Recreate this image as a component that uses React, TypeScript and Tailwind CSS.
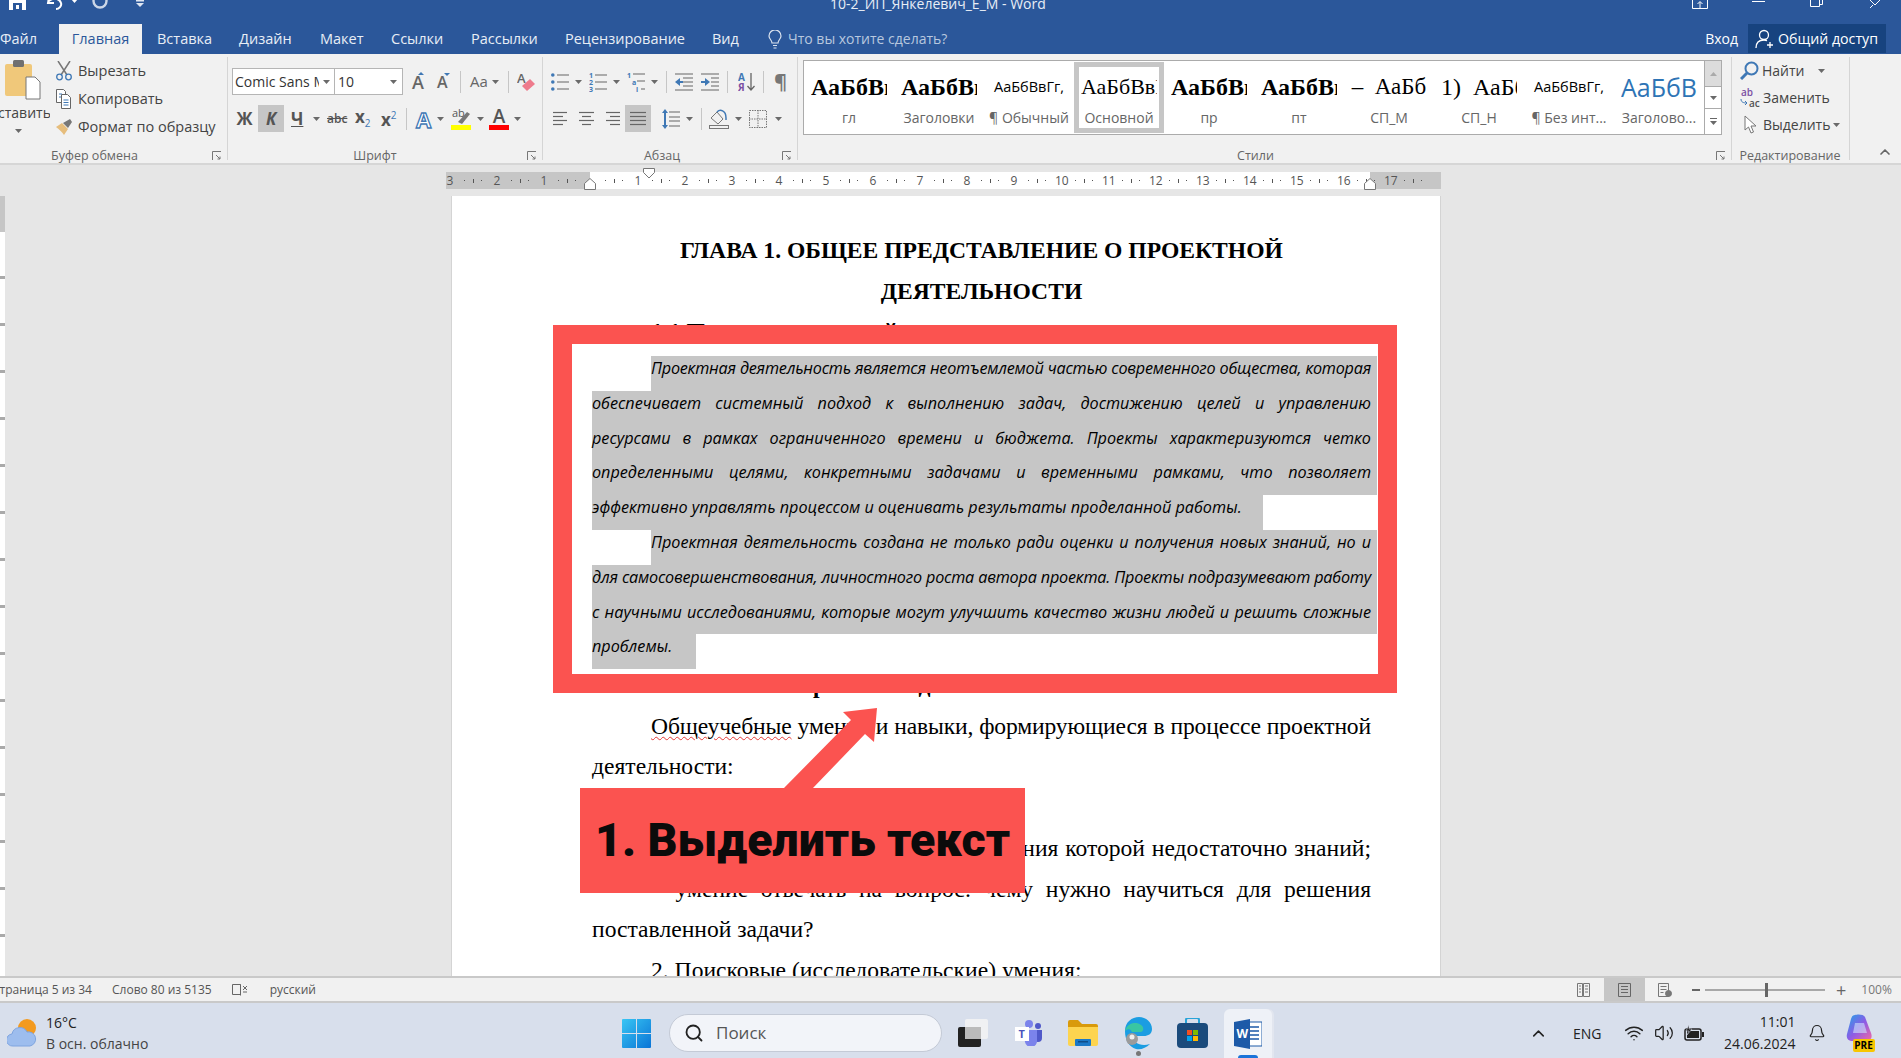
import { ReactNode } from "react";
import { Bell, ChevronUp, Search, Volume2, Wifi } from "lucide-react";

const Caret = ({ className = "" }: { className?: string }) => (
    <svg width="7" height="4" viewBox="0 0 7 4" className={className}><path d="M0 0h7L3.5 4z" fill="#6a6a6a" /></svg>
);

const Sep = ({ className = "" }: { className?: string }) => <div className={`w-px h-[22px] bg-[#c6c6c6] ${className}`} />;

const Launcher = ({ className = "" }: { className?: string }) => (
    <svg width="10" height="10" viewBox="0 0 10 10" className={`absolute -bottom-[1px] ${className}`} fill="none" stroke="#777">
        <path d="M.5 9V.5H9" /><path d="M4 4l4 4M8 5.5V8H5.5" />
    </svg>
);

const TextLines = ({ rows }: { rows: [number, number][] }) => (
    <svg width="18" height="20" viewBox="0 0 18 20" stroke="#666" strokeWidth="1.2">
        {rows.map(([a, b], i) => <line key={i} x1={a} x2={b} y1={3.5 + i * 4} y2={3.5 + i * 4} />)}
    </svg>
);

const Group = ({ width, label, labelClass = "", children, launcher }: { width: string; label: string; labelClass?: string; children: ReactNode; launcher?: string }) => (
    <div className={`relative shrink-0 flex flex-col border-r border-[#d5d5d5] mb-[3px] mt-[3px] ${width}`}>
        <div className="flex-1 min-h-0">{children}</div>
        <div className={`h-[16px] leading-[16px] translate-y-[4px] text-[12.5px] text-[#666] text-center ${labelClass}`}>{label}</div>
        {launcher && <Launcher className={launcher} />}
    </div>
);

const tabs = [
    { name: "Главная", cls: "w-[83px] ml-[24px] bg-[#f1f1f1] text-[#2b579a]" },
    { name: "Вставка", cls: "w-[52px] ml-[15px]" },
    { name: "Дизайн", cls: "w-[51px] ml-[30px]" },
    { name: "Макет", cls: "w-[43px] ml-[30px]" },
    { name: "Ссылки", cls: "w-[51px] ml-[28px]" },
    { name: "Рассылки", cls: "w-[65px] ml-[29px]" },
    { name: "Рецензирование", cls: "w-[118px] ml-[29px]" },
    { name: "Вид", cls: "w-[26px] ml-[29px]" },
];

const styleItems = [
    { sample: "АаБбВвГг", cls: "font-['Liberation_Serif',serif] text-[24px] font-bold", label: "гл" },
    { sample: "АаБбВвГг", cls: "font-['Liberation_Serif',serif] text-[24px] font-bold", label: "Заголовки" },
    { sample: "АаБбВвГг,", cls: "text-[14.5px] font-medium", label: "¶ Обычный" },
    { sample: "АаБбВвГг", cls: "font-['Liberation_Serif',serif] text-[22px]", label: "Основной", active: true },
    { sample: "АаБбВвГг", cls: "font-['Liberation_Serif',serif] text-[24px] font-bold", label: "пр" },
    { sample: "АаБбВвГг", cls: "font-['Liberation_Serif',serif] text-[24px] font-bold", label: "пт" },
    { sample: "–  АаБб", cls: "font-['Liberation_Serif',serif] text-[23px]", label: "СП_М" },
    { sample: "1)  АаБбВв", cls: "font-['Liberation_Serif',serif] text-[24px] text-left", label: "СП_Н" },
    { sample: "АаБбВвГг,", cls: "text-[14.5px] font-medium", label: "¶ Без инт..." },
    { sample: "АаБбВвГг", cls: "text-[25px] text-[#2e74b5]", label: "Заголово..." },
];

const Ruler = () => {
    const cells = [];
    for (let i = -3; i <= 17; i++) cells.push(Math.abs(i) || "");
    return (
        <div className="relative ml-[446px] w-[995px] h-[17px] mt-[7px] overflow-hidden bg-[linear-gradient(to_right,#c6c6c6_144px,#fff_144px,#fff_924px,#c6c6c6_924px)]">
            <div className="flex -ml-[2px] text-[12px] leading-[17px] text-[#555]">
                {cells.map((n, i) => (
                    <div key={i} className="w-[47px] shrink-0 flex items-center">
                        <span className="w-[12px] text-center">{n}</span>
                        <div className="flex-1 flex justify-evenly items-center pr-[1px]">
                            <span className="w-px h-px bg-[#555]" />
                            <span className="w-px h-[4px] bg-[#555]" />
                            <span className="w-px h-px bg-[#555]" />
                        </div>
                    </div>
                ))}
            </div>
        </div>
    );
};

const SelLine = ({ children, cls = "" }: { children: ReactNode; cls?: string }) => (
    <div className={`h-[34.8px] leading-[25px] bg-[#c6c6c6] pr-[6px] text-justify [text-align-last:justify] whitespace-nowrap ${cls}`}>{children}</div>
);

const DocLine = ({ children, cls = "" }: { children?: ReactNode; cls?: string }) => (
    <div className={`h-[40.7px] leading-[40.7px] whitespace-nowrap ${cls}`}>{children}</div>
);

const justified = "text-justify [text-align-last:justify]";

export default function App() {
    return (
        <div className="relative w-[1901px] h-[1058px] overflow-hidden flex flex-col bg-[#e6e6e6] font-['Open_Sans','Noto_Sans',sans-serif] text-[#444]">
            {/* title bar */}
            <div className="h-[24px] shrink-0 bg-[#2b579a] flex items-start overflow-hidden text-white">
                <svg width="17" height="18" viewBox="0 0 17 18" className="ml-[9px] -mt-[8px]" fill="#fff"><path d="M0 0h13l4 4v14H0z" /><rect x="4" y="11" width="9" height="7" fill="#2b579a" /><rect x="7" y="13" width="3" height="4" fill="#fff" /></svg>
                <svg width="20" height="18" viewBox="0 0 20 18" className="ml-[20px] -mt-[7px]" fill="none" stroke="#fff" strokeWidth="2"><path d="M3 4l-1 6 6 0M2 9c3-4 11-5 13 1 1 3-2 6-5 6" /></svg>
                <Caret className="ml-[5px] -mt-[1px] [&>path]:fill-white" />
                <svg width="18" height="18" viewBox="0 0 18 18" className="ml-[13px] -mt-[8px]" fill="none" stroke="#ccd7e8" strokeWidth="2.4"><circle cx="9" cy="9" r="6.5" /></svg>
                <svg width="8" height="10" viewBox="0 0 8 10" className="ml-[27px]" fill="#dfe6f1"><rect y="0" width="8" height="1.5" /><path d="M0 3h8L4 7z" /></svg>
                <div className="ml-[686px] -mt-[6px] leading-[20px] text-[14px] text-[#e8eef6]">10-2_ИП_Янкелевич_Е_М - Word</div>
                <svg width="16" height="10" viewBox="0 0 16 10" className="ml-[646px]" fill="none" stroke="#fff" strokeWidth="1"><path d="M.5 0v8.5h15V0M8 8V2M5.500 4L8 1.500 10.500 4" /></svg>
                <div className="ml-[44px] mt-[1px] w-[13px] h-px bg-white" />
                <svg width="13" height="10" viewBox="0 0 13 10" className="ml-[45px]" fill="none" stroke="#fff"><path d="M.5 0v6.500h9V0M10 4.500h2.500V0" /></svg>
                <svg width="13" height="9" viewBox="0 0 13 9" className="ml-[44px]" fill="none" stroke="#fff"><path d="M3 0l5 5 5-5M3 8l3-3" /></svg>
            </div>

            {/* tabs */}
            <div className="h-[30px] shrink-0 bg-[#2b579a] flex items-stretch text-[14.5px] text-[#e8eef6]">
                <div className="w-[35px] leading-[30px]">Файл</div>
                {tabs.map(tab => <div key={tab.name} className={`text-center leading-[30px] whitespace-nowrap ${tab.cls}`}>{tab.name}</div>)}
                <svg width="14" height="20" viewBox="0 0 14 20" className="ml-[30px] mt-[6px]" fill="none" stroke="#dbe3ef" strokeWidth="1.200"><path d="M4 13c0-3-3-4-3-7a6 6 0 0 1 12 0c0 3-3 4-3 7zM5 15.500h4M5.500 18h3" /></svg>
                <div className="ml-[6px] leading-[30px] text-[14px] text-[#b8c8df] whitespace-nowrap">Что вы хотите сделать?</div>
                <div className="ml-auto leading-[30px] text-white text-[14px]">Вход</div>
                <div className="ml-[10px] mr-[15px] w-[138px] mb-[1px] bg-[#17437f] text-white flex items-center text-[14.2px] whitespace-nowrap">
                    <svg width="20" height="20" viewBox="0 0 20 20" className="ml-[7px]" fill="none" stroke="#fff" strokeWidth="1.300"><circle cx="9" cy="6" r="4.500" /><path d="M1 19c0-5 3-8 8-8 1 0 2 .2 3 .6M15 13v6M12 16h6" /></svg>
                    <span className="ml-[3px]">Общий доступ</span>
                </div>
            </div>

            {/* ribbon */}
            <div className="h-[111px] shrink-0 bg-[#f1f1f1] border-b-2 border-[#d6d6d6] flex text-[14px]">
                <Group width="w-[228px]" label="Буфер обмена" labelClass="pr-[38px]" launcher="right-[5px]">
                    <div className="flex h-[83px]">
                        <div className="w-[50px] overflow-hidden">
                            <svg width="36" height="40" viewBox="0 0 36 40" className="ml-[5px] mt-[3px]">
                                <rect y="4" width="27" height="32" rx="2" fill="#f0c87a" />
                                <rect x="8" y="0" width="11" height="7" rx="1.500" fill="#707070" />
                                <path d="M21 17h9l5 5v17H21z" fill="#fff" stroke="#777" />
                            </svg>
                            <div className="-ml-[11px] mt-[3px] leading-[20px] whitespace-nowrap">Вставить</div>
                            <Caret className="ml-[15px] mt-[6px]" />
                        </div>
                        <div className="ml-[6px] mt-[3px] flex flex-col gap-[6px] whitespace-nowrap text-[14.5px]">
                            <div className="h-[22px] flex items-center gap-[6px]">
                                <svg width="16" height="20" viewBox="0 0 16 20" fill="none"><path d="M2 0l9 14M14 0L5 14" stroke="#777" strokeWidth="1.500" /><circle cx="3.500" cy="16" r="2.800" stroke="#3f78b5" strokeWidth="1.300" /><circle cx="12.500" cy="16" r="2.800" stroke="#3f78b5" strokeWidth="1.300" /></svg>
                                Вырезать
                            </div>
                            <div className="h-[22px] flex items-center gap-[6px]">
                                <svg width="16" height="20" viewBox="0 0 16 20" fill="#fff" stroke="#666"><path d="M.5 .5h7l2 2v11H.5z" /><path d="M5.500 5.500h6l3 3v11h-9z" /><path d="M3 5h3M3 8h2M7.500 11h5M7.500 13.500h5M7.500 16h5" stroke="#3f78b5" /></svg>
                                Копировать
                            </div>
                            <div className="h-[22px] flex items-center gap-[6px]">
                                <svg width="16" height="16" viewBox="0 0 16 16"><path d="M0 8l6-4 6 6-4 6C6 13 3 10 0 8z" fill="#e6bd7c" /><path d="M7 4l5 5 4-6-2-3z" fill="#777" /></svg>
                                Формат по образцу
                            </div>
                        </div>
                    </div>
                </Group>

                <Group width="w-[315px]" label="Шрифт" labelClass="pr-[20px]" launcher="right-[5px]">
                    <div className="flex items-center h-[27px] mt-[11px] ml-[4px]">
                        <div className="w-[103px] h-full bg-white border border-[#b5b5b5] flex items-center pl-[2px] overflow-hidden">
                            <span className="w-[84px] overflow-hidden whitespace-nowrap text-[14px] text-[#333]">Comic Sans MS</span>
                            <Caret className="ml-[4px]" />
                        </div>
                        <div className="w-[68px] h-full bg-white border border-[#b5b5b5] border-l-0 flex items-center pl-[3px] text-[#333]">
                            <span className="flex-1">10</span>
                            <Caret className="mr-[5px]" />
                        </div>
                        <div className="ml-[9px] w-[16px] text-[18px] font-semibold text-[#666] leading-none relative">A<span className="absolute -top-[1px] left-[6px] w-0 h-0 border-x-[3px] border-b-[3px] border-x-transparent border-b-[#3f78b5]" /></div>
                        <div className="ml-[9px] w-[13px] text-[16px] font-semibold text-[#666] leading-none relative">A<span className="absolute -top-[1px] left-[7px] w-0 h-0 border-x-[3px] border-t-[3px] border-x-transparent border-t-[#3f78b5]" /></div>
                        <Sep className="ml-[10px]" />
                        <div className="ml-[9px] w-[18px] text-[15px] text-[#666]">Aa</div>
                        <Caret className="ml-[4px]" />
                        <Sep className="ml-[9px]" />
                        <svg width="19" height="22" viewBox="0 0 19 22" className="ml-[8px]"><text x="0" y="12" fontSize="13" fill="#666" fontWeight="600">A</text><path d="M5 15l8-7 5 5-8 7z" fill="#ee7b8c" /></svg>
                    </div>
                    <div className="flex items-center h-[27px] mt-[10px] ml-[4px] text-[#555]">
                        <div className="ml-[4px] w-[17px] text-[17px] font-bold text-center">Ж</div>
                        <div className="ml-[5px] w-[26px] h-full bg-[#c6c6c6] text-[17px] font-bold italic text-center leading-[27px]">К</div>
                        <div className="ml-[7px] w-[12px] text-[17px] font-bold underline text-center">Ч</div>
                        <Caret className="ml-[10px]" />
                        <div className="ml-[7px] w-[20px] text-[12px] font-semibold line-through text-center">abc</div>
                        <div className="ml-[8px] w-[16px] text-[17px] font-bold leading-none">x<span className="text-[10px] font-normal text-[#3f78b5] align-sub">2</span></div>
                        <div className="ml-[10px] w-[16px] text-[17px] font-bold leading-none">x<span className="text-[10px] font-normal text-[#3f78b5] align-super">2</span></div>
                        <Sep className="ml-[9px]" />
                        <div className="ml-[9px] w-[17px] text-[22px] font-bold leading-none text-white [-webkit-text-stroke:1.3px_#3f78b5]">A</div>
                        <Caret className="ml-[4px]" />
                        <svg width="20" height="22" viewBox="0 0 20 22" className="ml-[7px]"><text x="1" y="9" fontSize="11" fill="#555">ab</text><path d="M7 14L16 4l3 2-8 10z" fill="#777" /><rect y="17" width="20" height="5" fill="#ffff00" /></svg>
                        <Caret className="ml-[6px]" />
                        <div className="ml-[5px] w-[20px] flex flex-col items-center">
                            <span className="text-[19px] font-semibold leading-[17px]">A</span>
                            <span className="w-full h-[5px] bg-[#ff0000]" />
                        </div>
                        <Caret className="ml-[5px]" />
                    </div>
                </Group>

                <Group width="w-[255px]" label="Абзац" labelClass="pr-[16px]" launcher="right-[5px]">
                    <div className="flex items-center h-[27px] mt-[11px] ml-[8px]">
                        <svg width="18" height="20" viewBox="0 0 18 20" stroke="#666" strokeWidth="1.200"><path d="M6 3h12M6 10h12M6 17h12" /><g fill="#3f78b5" stroke="none"><circle cx="1.800" cy="3" r="1.800" /><circle cx="1.800" cy="10" r="1.800" /><circle cx="1.800" cy="17" r="1.800" /></g></svg>
                        <Caret className="ml-[6px]" />
                        <svg width="18" height="20" viewBox="0 0 18 20" stroke="#666" strokeWidth="1.200" className="ml-[7px]"><path d="M6 3h12M6 10h12M6 17h12" /><g fill="#3f78b5" stroke="none" fontSize="7" fontWeight="700"><text x="0" y="6">1</text><text x="0" y="13">2</text><text x="0" y="20">3</text></g></svg>
                        <Caret className="ml-[6px]" />
                        <svg width="18" height="20" viewBox="0 0 18 20" stroke="#666" strokeWidth="1.200" className="ml-[7px]"><path d="M6 2h12M10 9h8M14 17h4" /><g fill="#3f78b5" stroke="none" fontSize="7" fontWeight="700"><text x="0" y="6">1</text><text x="5" y="13">a</text><text x="9" y="20">i</text></g></svg>
                        <Caret className="ml-[6px]" />
                        <Sep className="ml-[8px]" />
                        <svg width="18" height="18" viewBox="0 0 18 18" stroke="#666" strokeWidth="1.200" className="ml-[8px]"><path d="M0 1h18M8 5h10M8 9h10M8 13h10M0 17h18" /><path d="M0 9l5-4v3h3v2H5v3z" fill="#3f78b5" stroke="none" /></svg>
                        <svg width="18" height="18" viewBox="0 0 18 18" stroke="#666" strokeWidth="1.200" className="ml-[8px]"><path d="M0 1h18M10 5h8M10 9h8M10 13h8M0 17h18" /><path d="M9 9L4 5v3H0v2h4v3z" fill="#3f78b5" stroke="none" /></svg>
                        <Sep className="ml-[8px]" />
                        <svg width="17" height="20" viewBox="0 0 17 20" className="ml-[10px]" fontWeight="700" fontSize="10"><text x="0" y="9" fill="#3f78b5">A</text><text x="0" y="19" fill="#7b4fa3">Я</text><path d="M13 1v16M9.500 14l3.500 4 3.500-4" fill="none" stroke="#666" strokeWidth="1.300" /></svg>
                        <Sep className="ml-[8px]" />
                        <div className="ml-[10px] w-[12px] text-[20px] font-bold text-[#777] leading-none">¶</div>
                    </div>
                    <div className="flex items-center h-[27px] mt-[10px] ml-[9px]">
                        <TextLines rows={[[1, 15], [1, 11], [1, 15], [1, 11]]} />
                        <div className="ml-[8px] w-[18px]"><TextLines rows={[[1, 16], [4, 13], [1, 16], [4, 13]]} /></div>
                        <div className="ml-[8px] w-[18px]"><TextLines rows={[[2, 16], [6, 16], [2, 16], [6, 16]]} /></div>
                        <div className="ml-[3px] w-[26px] h-full bg-[#c6c6c6] flex items-center justify-center"><TextLines rows={[[1, 17], [1, 17], [1, 17], [1, 17]]} /></div>
                        <svg width="18" height="20" viewBox="0 0 18 20" stroke="#666" strokeWidth="1.200" className="ml-[11px]"><path d="M7 3h11M7 8h11M7 12h11M7 17h11" /><path d="M3 0l3 4H4v12h2l-3 4-3-4h2V4H0z" fill="#3f78b5" stroke="none" /></svg>
                        <Caret className="ml-[6px]" />
                        <Sep className="ml-[8px]" />
                        <svg width="20" height="20" viewBox="0 0 20 20" className="ml-[7px]" fill="none" stroke="#777"><path d="M2 9l6-6 6 7-5 5z" /><path d="M8 3c3-3 9-2 9 6v2" stroke="#3f78b5" strokeWidth="1.500" /><rect x=".5" y="16.500" width="19" height="3" /></svg>
                        <Caret className="ml-[6px]" />
                        <svg width="18" height="18" viewBox="0 0 18 18" className="ml-[7px]" fill="none" stroke="#777" strokeDasharray="1.500 1"><rect x=".5" y=".5" width="17" height="17" /><path d="M9 0v18M0 9h18" /></svg>
                        <Caret className="ml-[8px]" />
                    </div>
                </Group>

                <Group width="w-[934px]" label="Стили" labelClass="pr-[18px]" launcher="right-[5px]">
                    <div className="flex ml-[5px] mt-[3px] h-[75px] w-[920px]">
                        <div className="w-[902px] bg-white border border-[#ababab] flex text-black">
                            {styleItems.map(item => (
                                <div key={item.label} className={`w-[90px] shrink-0 h-[71px] my-auto border-[5px] flex flex-col items-center ${item.active ? "border-[#c6c6c6]" : "border-transparent"}`}>
                                    <div className={`w-[76px] h-[32px] mt-[4px] leading-[32px] overflow-hidden whitespace-pre text-center ${item.cls}`}>{item.sample}</div>
                                    <div className="h-[20px] mt-[5px] text-[14px] leading-[20px] text-[#666] whitespace-nowrap">{item.label}</div>
                                </div>
                            ))}
                        </div>
                        <div className="w-[17px] flex flex-col border border-l-0 border-[#ababab] bg-white">
                            <div className="h-[25px] bg-[#dcdcdc] flex items-center justify-center"><Caret className="rotate-180 [&>path]:fill-[#aaa]" /></div>
                            <div className="h-[23px] border-y border-[#ababab] flex items-center justify-center"><Caret /></div>
                            <div className="flex-1 flex flex-col items-center justify-center gap-[2px]"><span className="w-[7px] h-px bg-[#666]" /><Caret /></div>
                        </div>
                    </div>
                </Group>

                <Group width="w-[118px]" label="Редактирование" labelClass="-ml-[1px]">
                    <div className="pl-[8px] whitespace-nowrap">
                        <div className="h-[27px] flex items-center">
                            <svg width="19" height="19" viewBox="0 0 19 19" fill="none" stroke="#3f78b5" strokeWidth="2"><circle cx="11.500" cy="7.500" r="6" /><path d="M7 12l-6 6" strokeWidth="3" /></svg>
                            <span className="ml-[3px]">Найти</span><Caret className="ml-[13px]" />
                        </div>
                        <div className="h-[27px] flex items-center">
                            <svg width="20" height="20" viewBox="0 0 20 20" fontSize="10" fontWeight="600"><text x="1" y="8" fill="#7b4fa3">ab</text><text x="9" y="19" fill="#555">ac</text><path d="M1 11c0 3 2 4 6 4M5 13l2 2-2 2" fill="none" stroke="#3f78b5" /></svg>
                            <span className="ml-[3px]">Заменить</span>
                        </div>
                        <div className="h-[27px] flex items-center">
                            <svg width="18" height="20" viewBox="0 0 18 20" className="ml-[1px]" fill="#fff" stroke="#777"><path d="M4 1v14l3.500-3 2.500 6 2.500-1-2.500-6h5z" /></svg>
                            <span className="ml-[4px]">Выделить</span><Caret className="ml-[3px]" />
                        </div>
                    </div>
                </Group>
                <ChevronUp size={16} strokeWidth={2.5} className="self-end mb-[3px] ml-[27px] text-[#666]" />
            </div>

            {/* ruler */}
            <div className="h-[31px] shrink-0 bg-[#e6e6e6] relative">
                <Ruler />
                <svg width="12" height="11" viewBox="0 0 12 11" className="absolute left-[643px] top-[3px]" fill="#fff" stroke="#777"><path d="M.5 .5h11v4L6 10 .5 4.500z" /></svg>
                <svg width="12" height="12" viewBox="0 0 12 12" className="absolute left-[584px] top-[13px]" fill="#fff" stroke="#777"><path d="M.5 11.500v-6L6 .5l5.500 5v6z" /></svg>
                <svg width="12" height="12" viewBox="0 0 12 12" className="absolute left-[1364px] top-[13px]" fill="#fff" stroke="#777"><path d="M.5 11.500v-6L6 .5l5.500 5v6z" /></svg>
            </div>

            {/* document */}
            <div className="flex-1 min-h-0 flex overflow-hidden font-['Liberation_Serif',serif] text-black text-[23.6px]">
                <div className="w-[5px] shrink-0 flex flex-col">
                    <div className="h-[36px] bg-[#c6c6c6]" />
                    <div className="flex-1 bg-[repeating-linear-gradient(to_bottom,#fff_0,#fff_44px,#aaa_44px,#aaa_47px)]" />
                </div>
                <div className="relative ml-[446px] w-[990px] bg-white border-l border-r border-[#d4d4d4] pt-[34px] pl-[140px] pr-[69px]">
                    <DocLine cls="text-center font-bold">ГЛАВА 1. ОБЩЕЕ ПРЕДСТАВЛЕНИЕ О ПРОЕКТНОЙ</DocLine>
                    <DocLine cls="text-center font-bold">ДЕЯТЕЛЬНОСТИ</DocLine>
                    <DocLine cls="pl-[59px] font-bold">1.1 Понятие проектной деятельности</DocLine>
                    <div className="h-[313px]" />
                    <DocLine cls="pl-[59px] font-bold">1.3 Навыки в проектной деятельности</DocLine>
                    <DocLine cls={`pl-[59px] tracking-[-0.15px] ${justified}`}><span className="underline decoration-wavy decoration-[#e53935] decoration-1 underline-offset-2">Общеучебные</span> умения и навыки, формирующиеся в процессе проектной</DocLine>
                    <DocLine>деятельности:</DocLine>
                    <DocLine cls="pl-[59px]">1. Проблемные умения:</DocLine>
                    <DocLine cls={`pl-[59px] ${justified}`}>– умение видеть проблему, для решения которой недостаточно знаний;</DocLine>
                    <DocLine cls={`pl-[59px] ${justified}`}>– умение отвечать на вопрос: чему нужно научиться для решения</DocLine>
                    <DocLine>поставленной задачи?</DocLine>
                    <DocLine cls="pl-[59px]">2. Поисковые (исследовательские) умения:</DocLine>

                    {/* annotation frame */}
                    <div className="absolute left-[101px] top-[129px] w-[844px] h-[368px] border-[19px] border-[#fb5350] bg-white pt-[12px] pl-[20px] pr-[1px] font-['Open_Sans',sans-serif] italic text-[16.2px]">
                        <SelLine cls="ml-[59px] tracking-[-0.22px]">Проектная деятельность является неотъемлемой частью современного общества, которая</SelLine>
                        <SelLine>обеспечивает системный подход к выполнению задач, достижению целей и управлению</SelLine>
                        <SelLine>ресурсами в рамках ограниченного времени и бюджета. Проекты характеризуются четко</SelLine>
                        <SelLine>определенными целями, конкретными задачами и временными рамками, что позволяет</SelLine>
                        <SelLine cls="w-[671px] [text-align-last:left]">эффективно управлять процессом и оценивать результаты проделанной работы.</SelLine>
                        <SelLine cls="ml-[59px]">Проектная деятельность создана не только ради оценки и получения новых знаний, но и</SelLine>
                        <SelLine cls="tracking-[-0.2px]">для самосовершенствования, личностного роста автора проекта. Проекты подразумевают работу</SelLine>
                        <SelLine>с научными исследованиями, которые могут улучшить качество жизни людей и решить сложные</SelLine>
                        <SelLine cls="w-[104px] [text-align-last:left]">проблемы.</SelLine>
                    </div>
                    <svg width="94" height="80" viewBox="0 0 94 80" className="absolute left-[332px] top-[512px]" fill="#fb5350"><path d="M0 80L67 12 59 4 93 0 90 34 81 26 29 80z" /></svg>
                    <div className="absolute left-[128px] top-[592px] w-[445px] h-[105px] bg-[#fb5350] flex items-center pl-[15px] font-['Roboto',sans-serif] font-black text-[46.5px] text-[#0b0b0b] whitespace-nowrap">1. Выделить текст</div>
                </div>
            </div>

            {/* status bar */}
            <div className="h-[27px] shrink-0 bg-[#f1f1f1] border-t-2 border-b-2 border-[#c9c9c9] flex items-center text-[12px] text-[#555] whitespace-nowrap">
                <span className="-ml-[8px]">Страница 5 из 34</span>
                <span className="ml-[20px]">Слово 80 из 5135</span>
                <svg width="16" height="14" viewBox="0 0 16 14" className="ml-[20px]" fill="none" stroke="#666"><path d="M.5 1.500h8v10h-8zM8.500 1.500v11" /><path d="M11 3l4 4M15 3l-4 4M11 9h4" /></svg>
                <span className="ml-[22px]">русский</span>
                <svg width="13" height="14" viewBox="0 0 13 14" className="ml-[1261px]" fill="none" stroke="#777"><path d="M.5 .5h5v13h-5zM6.500 .5h6v13h-6zM2 3h2M2 6h2M2 9h2M8 3h3M8 6h3M8 9h3" /></svg>
                <div className="ml-[14px] w-[41px] h-full bg-[#c6c6c6] flex items-center justify-center">
                    <svg width="13" height="14" viewBox="0 0 13 14" fill="none" stroke="#666"><path d="M.5 .5h12v13H.5zM3 3.500h7M3 6.500h7M3 9.500h7" /></svg>
                </div>
                <svg width="14" height="14" viewBox="0 0 14 14" className="ml-[13px]" fill="none" stroke="#777"><path d="M.5 .5h10v13H.5zM2.500 3.500h6M2.500 6.500h6M2.500 9.500h3" /><circle cx="10.500" cy="10.500" r="3" fill="#777" /></svg>
                <span className="ml-[20px] w-[8px] h-[2px] bg-[#666]" />
                <div className="ml-[5px] w-[120px] h-[2px] bg-[#a8a8a8] relative"><span className="absolute left-[60px] -top-[6px] w-[3px] h-[14px] bg-[#666]" /></div>
                <span className="ml-[11px] text-[18px] leading-none text-[#666]">+</span>
                <span className="ml-[15px] text-[12px] text-[#777]">100%</span>
            </div>

            {/* taskbar */}
            <div className="h-[55px] shrink-0 bg-[#d8dfec] flex items-center pt-[5px] text-[#222] whitespace-nowrap">
                <svg width="30" height="30" viewBox="0 0 30 30" className="ml-[7px]">
                    <circle cx="20" cy="10" r="9" fill="#f39a1f" />
                    <path d="M6 28a6 6 0 0 1-1-12 8 8 0 0 1 15-2 7 7 0 0 1 3 14z" fill="#9dbdee" stroke="#7ea4df" />
                </svg>
                <div className="ml-[9px] w-[105px] flex flex-col text-[14px] leading-[21px]">
                    <span>16°C</span>
                    <span className="text-[#444]">В осн. облачно</span>
                </div>
                <svg width="29" height="29" viewBox="0 0 29 29" className="ml-[471px]">
                    <defs><linearGradient id="win" x1="0" y1="0" x2="1" y2="1"><stop offset="0" stopColor="#38c6f4" /><stop offset="1" stopColor="#0a74d6" /></linearGradient></defs>
                    <path d="M0 1a1 1 0 0 1 1-1h13v14H0zM15 0h13a1 1 0 0 1 1 1v13H15zM0 15h14v14H1a1 1 0 0 1-1-1zM15 15h14v13a1 1 0 0 1-1 1H15z" fill="url(#win)" />
                </svg>
                <div className="ml-[18px] w-[273px] h-[38px] rounded-full bg-[#f2f4f9] border border-[#c4cad6] flex items-center pl-[14px] text-[17px] text-[#555]">
                    <Search size={20} strokeWidth={2.200} className="text-[#222]" />
                    <span className="ml-[12px]">Поиск</span>
                </div>
                <svg width="30" height="28" viewBox="0 0 30 28" className="ml-[16px]"><rect y="8" width="23" height="20" rx="2" fill="#222" /><rect x="7" y="0" width="23" height="20" rx="2" fill="#f4f4f4" opacity=".85" /><rect x="7" y="8" width="16" height="12" fill="#bbb" /></svg>
                <svg width="27" height="26" viewBox="0 0 27 26" className="ml-[27px]"><circle cx="14" cy="4" r="4" fill="#7b83eb" /><circle cx="23" cy="6" r="3" fill="#5059c9" /><path d="M18 10h9v8a4 4 0 0 1-8 0z" fill="#5059c9" /><path d="M8 10h14v10a6 6 0 0 1-12 2z" fill="#7b83eb" /><rect y="7" width="14" height="14" fill="#fff" /><text x="3.500" y="18" fontSize="11" fontWeight="700" fill="#4b53bc">T</text></svg>
                <svg width="30" height="26" viewBox="0 0 30 26" className="ml-[26px]"><path d="M0 2a2 2 0 0 1 2-2h8l4 4h14a2 2 0 0 1 2 2v4H0z" fill="#d99a0b" /><path d="M0 7h30v17a2 2 0 0 1-2 2H2a2 2 0 0 1-2-2z" fill="#fdd44f" /><rect x="7" y="19" width="16" height="7" rx="1" fill="#1a78c8" /><rect x="10" y="21" width="10" height="1.500" fill="#0d4d8a" /></svg>
                <div className="relative ml-[25px] w-[30px] h-[34px]">
                    <svg width="30" height="34" viewBox="0 0 30 34"><path d="M2 15C2 6 9 1 16 1c7 0 13 5 13 12 0 5-4 7-8 7H9c1 7 9 11 18 8-4 4-9 6-14 5C6 31 2 24 2 15z" fill="#1b9de2" /><path d="M2 15C4 7 13 5 18 9c3 2 3 6 0 7H9C8 13 5 12 2 15z" fill="#39c6a2" /><circle cx="9" cy="23" r="6" fill="#9b9b9b" /><circle cx="9" cy="21" r="2.500" fill="#eee" /></svg>
                    <span className="absolute left-[13px] -bottom-[6px] w-[5px] h-[5px] rounded-full bg-[#777]" />
                </div>
                <svg width="31" height="30" viewBox="0 0 31 30" className="ml-[24px]"><path d="M9 6V2a2 2 0 0 1 2-2h9a2 2 0 0 1 2 2v4" fill="none" stroke="#28a3d8" strokeWidth="2" /><rect y="5" width="31" height="25" rx="4" fill="#1b4b7c" /><rect x="10" y="12" width="5" height="5" fill="#f25022" /><rect x="16" y="12" width="5" height="5" fill="#7fba00" /><rect x="10" y="18" width="5" height="5" fill="#00a4ef" /><rect x="16" y="18" width="5" height="5" fill="#ffb900" /></svg>
                <div className="relative ml-[16px] w-[48px] h-[49px] self-end rounded-t-[6px] bg-[#eef1f7] shadow-[2px_0_0_#e2e6ef] flex items-center justify-center">
                    <svg width="28" height="30" viewBox="0 0 28 30"><rect x="9" y="3" width="19" height="24" fill="#fff" stroke="#1d5aa8" /><path d="M15 8h10M15 12h10M15 16h10M15 20h10" stroke="#1d5aa8" strokeWidth="1.500" /><path d="M0 3l16-3v30L0 27z" fill="#1d5aa8" /><text x="2.500" y="19" fontSize="12" fontWeight="700" fill="#fff">W</text></svg>
                    <span className="absolute left-[14px] bottom-0 w-[20px] h-[3px] rounded-t-sm bg-[#1a73d9]" />
                </div>
                <ChevronUp size={19} strokeWidth={2} className="ml-[257px] text-[#222]" />
                <span className="ml-[25px] text-[14px] font-['Open_Sans',sans-serif]">ENG</span>
                <Wifi size={20} strokeWidth={1.800} className="ml-[22px]" />
                <Volume2 size={20} strokeWidth={1.500} className="ml-[10px]" />
                <svg width="20" height="16" viewBox="0 0 20 16" className="ml-[10px]"><rect x="1" y="4" width="16" height="11" rx="2" fill="none" stroke="#222" strokeWidth="1.500" /><rect x="3" y="6" width="12" height="7" fill="#222" /><rect x="18" y="7" width="2" height="5" fill="#222" /><path d="M5 0L2 6h3L3 10l5-6H5z" fill="#222" stroke="#d8dfec" strokeWidth=".5" /></svg>
                <div className="ml-[20px] w-[72px] flex flex-col items-end text-[14px] leading-[22px]">
                    <span>11:01</span>
                    <span>24.06.2024</span>
                </div>
                <Bell size={18} strokeWidth={1.600} className="ml-[12px]" />
                <div className="relative ml-[20px] w-[30px] h-[38px]">
                    <svg width="30" height="27" viewBox="0 0 30 27">
                        <defs><linearGradient id="cop" x1="0" y1="0" x2="1" y2="1"><stop offset="0" stopColor="#1fa5e8" /><stop offset=".5" stopColor="#8c5be6" /><stop offset="1" stopColor="#f16aa4" /></linearGradient></defs>
                        <path d="M9 1c2-1 9-1 10 2l6 16c2 5-1 8-6 8H7c-5 0-7-3-6-7L5 5c1-3 2-4 4-4z" fill="url(#cop)" />
                        <path d="M9 9h9l3 10H7z" fill="#cfe4fb" opacity=".6" />
                    </svg>
                    <span className="absolute left-[7px] bottom-0 w-[22px] h-[13px] rounded-[2px] bg-[#f7c600] text-[10px] font-bold leading-[13px] text-center text-black">PRE</span>
                </div>
            </div>
        </div>
    );
}
